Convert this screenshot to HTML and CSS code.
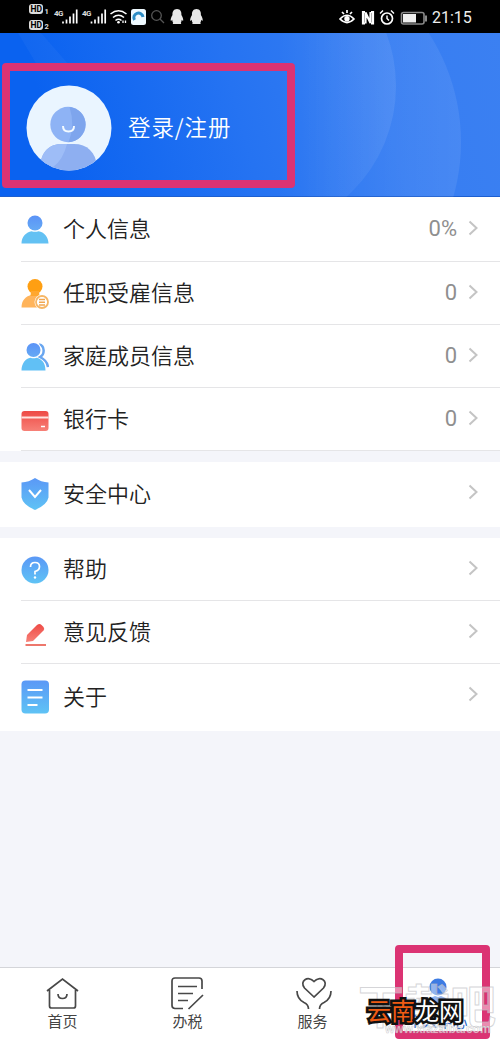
FILE: index.html
```html
<!DOCTYPE html>
<html lang="zh-CN">
<head>
<meta charset="utf-8">
<title>个人中心</title>
<link rel="stylesheet" href="styles.css">
</head>
<body>
<svg class="defs" width="0" height="0">
  <defs>
    <linearGradient id="blue" x1="0" y1="0" x2="0" y2="1"><stop offset="0" stop-color="#5b98f6"/><stop offset="1" stop-color="#5fc3f5"/></linearGradient>
    <linearGradient id="head" x1="0" y1="0" x2="0" y2="1"><stop offset="0" stop-color="#5b93f7"/><stop offset="1" stop-color="#65aaf4"/></linearGradient>
    <linearGradient id="red" x1="0" y1="0" x2="0" y2="1"><stop offset="0" stop-color="#ee4b46"/><stop offset="1" stop-color="#f78178"/></linearGradient>
    <linearGradient id="fade" x1="0" y1="0" x2="1" y2="0"><stop offset=".6" stop-color="#fff" stop-opacity="0"/><stop offset="1" stop-color="#fff" stop-opacity=".08"/></linearGradient>
  </defs>
</svg>
<div class="screen">
  <header class="status">
    <svg class="status-left" width="180" height="33" viewBox="0 0 180 33">
      <g fill="#ddd"><rect x="1" y="4" width="14" height="10" rx="3"/><rect x="1" y="20" width="14" height="10" rx="3"/></g>
      <g class="hd"><text x="2.5" y="12">HD</text><text x="2.5" y="28">HD</text></g>
      <g class="tiny"><text x="16.500" y="14">1</text><text x="16.500" y="29">2</text><text class="net" x="26" y="16">4G</text><text class="net" x="54" y="16">4G</text></g>
      <g stroke="#fff" stroke-width="1.7"><path d="M35 23.500v-2M38.500 23.500v-4M42 23.500v-7M45.500 23.500v-10M48.700 23.500v-14M63.500 23.500v-2M67 23.500v-4M70.500 23.500v-7M74 23.500v-10M77.200 23.500v-14"/></g>
      <g fill="none" stroke="#fff" stroke-width="1.6"><path d="M82.500 14q8-6.500 16 0M85 17.500q5.500-4.500 11 0M87.500 20.500q3-2.500 6 0"/></g>
      <circle cx="90.500" cy="22.300" r="1.300" fill="#fff"/><path d="M95 23v-2.500m2.500 0v2.500" stroke="#fff" stroke-width="1.300"/>
      <rect x="103" y="9" width="15" height="16" rx="2.500" fill="#eef9ff"/><path d="M106.500 20a4.600 4.600 0 1 1 8.500-3" fill="none" stroke="#2c8cc5" stroke-width="3"/>
      <g fill="none" stroke="#555" stroke-width="1.300"><circle cx="128.500" cy="15.500" r="4.800"/><path d="m132 19 4 4"/></g>
      <g fill="#e8e8e8"><path id="qq" d="M149 9c-3.500 0-4.800 3-4.500 6-1.300 2-2 4-1.800 5.500.5.800 1-.2 1.500-.8.300 1.800.5 2.500 1 3-.7.800-.5 1.400.8 1.400h6c1.300 0 1.500-.6.800-1.400.5-.7.700-1.500.9-3 .6.700 1.200 1.500 1.500.8.200-1.500-.5-3.500-1.800-5.500C153.700 12 152.500 9 149 9z"/><use href="#qq" x="19.500"/></g>
    </svg>
    <div class="status-right">
      <svg width="90" height="20" viewBox="0 0 90 20">
        <g fill="none" stroke="#fff" stroke-width="1.700"><path d="M1 11q7-7.500 14 0-7 7-14 0zM3 4l2 2M8 2v3M13 4l-2 2"/><path d="M26 4h-2v11.500h2M32 4h2v11.500h-2M26.500 15.500V4.500l5 10.500V4" stroke-width="2.200"/><circle cx="48" cy="10.500" r="5.500"/><path d="M48 7.500v3l2 2M41 5.500l3-3M55 5.500l-3-3" stroke-width="1.400"/></g>
        <circle cx="8" cy="10.800" r="2.700" fill="#fff"/>
        <rect x="62.500" y="4.500" width="22.500" height="11.500" rx="2" fill="none" stroke="#888" stroke-width="1.600"/><rect x="64" y="6" width="13" height="8.500" fill="#eee"/><path d="M87 7.500v6" stroke="#888" stroke-width="2"/>
      </svg>
      <span class="time">21:15</span>
    </div>
  </header>

  <section class="profile">
    <svg class="waves" width="500" height="164" viewBox="0 0 500 164"><circle cx="247" cy="53" r="149" fill="url(#fade)"/><circle cx="261" cy="109" r="200" fill="url(#fade)"/><path d="M18 0h23l28 32H37z" fill="#fff" opacity=".035"/></svg>
    <svg class="avatar" width="86" height="86" viewBox="0 0 86 86">
      <clipPath id="face"><circle cx="43" cy="43" r="42.500"/></clipPath>
      <circle cx="43" cy="43" r="42.500" fill="#eaf5ff"/>
      <g clip-path="url(#face)"><circle cx="42" cy="39.500" r="17.700" fill="#8eb3f5"/><path d="M43.500 21.900a17.700 17.700 0 0 1-1 35.300q7-17 1-35.300z" fill="#7ea5ed"/><path d="M14 82c1-16 10-23 22-23h12c13 0 22 8 23 23v4H14z" fill="#8eaff1"/><path d="M14 82c1-16 10-23 22-23h5Q37 75 27 82v4H14z" fill="#9ebdf7"/></g>
      <path d="M37 41q0 5.500 5.500 5.500T48 41" fill="none" stroke="#f3faff" stroke-width="2"/>
    </svg>
    <span class="login">登录/注册</span>
  </section>

  <main class="menu">
    <section class="group">
      <div class="row r1"><svg class="icon" viewBox="0 0 28 34"><circle cx="14" cy="11" r="7.500" fill="url(#head)"/><path d="M.5 31.500c0-7 5-11.500 10-12.300q3.500 1.300 7 0C23 20 27.500 25 27.500 31.500z" fill="#63c1f3"/></svg><span class="label">个人信息</span><span class="value">0%</span><svg class="arrow" viewBox="0 0 10 16"><path d="m1.500 1.500 7 6.500-7 6.500"/></svg></div>
      <div class="row r2"><svg class="icon" viewBox="0 0 28 34"><path d="M.5 31.500c0-7 4-11 9.500-12.500l4-1 5 2 3 3-5 8.500z" fill="#ffb45b"/><circle cx="14" cy="10.500" r="7.500" fill="#ff9f12"/><path d="M10 15h8l.5 5h-9z" fill="#ffa72f"/><circle cx="21" cy="26" r="7.500" fill="#fff"/><circle cx="21" cy="26" r="6" fill="#fff" stroke="#f6b665" stroke-width="1.800"/><path d="M18 23.500h6M18 26.200h6M18 29h6" stroke="#f1a750" stroke-width="1.400"/></svg><span class="label">任职受雇信息</span><span class="value">0</span><svg class="arrow" viewBox="0 0 10 16"><path d="m1.500 1.500 7 6.500-7 6.500"/></svg></div>
      <div class="row r3"><svg class="icon" viewBox="0 0 28 34"><path d="M18 5.500c6 1 6 10 1 12.500 5 2.500 7.500 6 8 10" fill="none" stroke="#69a6f0" stroke-width="2.500"/><circle cx="12.500" cy="11" r="8" fill="#fff"/><circle cx="12.500" cy="11" r="7" fill="url(#head)"/><path d="M.5 31.500c0-7 4-12 9-12.800q3 1.200 6 0C21 20 24.500 24 24.500 31.500z" fill="#61c0f5"/></svg><span class="label">家庭成员信息</span><span class="value">0</span><svg class="arrow" viewBox="0 0 10 16"><path d="m1.500 1.500 7 6.500-7 6.500"/></svg></div>
      <div class="row r4"><svg class="icon" viewBox="0 0 28 34"><rect x=".5" y="9" width="27" height="20" rx="3" fill="url(#red)"/><path d="M.5 15.500h27" stroke="#ffe4e0" stroke-width="2"/><path d="M20 24.500h4" stroke="#fff" stroke-width="1.500"/></svg><span class="label">银行卡</span><span class="value">0</span><svg class="arrow" viewBox="0 0 10 16"><path d="m1.500 1.500 7 6.500-7 6.500"/></svg></div>
    </section>
    <section class="group">
      <div class="row r5"><svg class="icon" viewBox="0 0 28 34"><path d="M14 1q6 4 13.500 4.500v15Q26 28 14 33 2 28 .5 20.500v-15Q8 5 14 1z" fill="url(#blue)"/><path d="m8 13 6 7 6-7" fill="none" stroke="#fff" stroke-width="2"/></svg><span class="label">安全中心</span><svg class="arrow" viewBox="0 0 10 16"><path d="m1.500 1.500 7 6.500-7 6.500"/></svg></div>
    </section>
    <section class="group">
      <div class="row r6"><svg class="icon" viewBox="0 0 28 34"><circle cx="14" cy="18" r="13.500" fill="url(#blue)"/><path d="M9.500 15q0-4.500 4.500-4.500t4.500 4-4.500 5v3" fill="none" stroke="#fff" stroke-width="1.700"/><circle cx="14" cy="25.500" r="1.200" fill="#fff"/></svg><span class="label">帮助</span><svg class="arrow" viewBox="0 0 10 16"><path d="m1.500 1.500 7 6.500-7 6.500"/></svg></div>
      <div class="row r7"><svg class="icon" viewBox="0 0 28 34"><path d="m6 20 10-10q2.500-2 4.500 0l2 2q1.500 2 0 3.500L12 26l-7 1z" fill="url(#red)"/><path d="M4.500 30h20.500" stroke="#ed776c" stroke-width="2"/></svg><span class="label">意见反馈</span><svg class="arrow" viewBox="0 0 10 16"><path d="m1.500 1.500 7 6.500-7 6.500"/></svg></div>
      <div class="row r8"><svg class="icon" viewBox="0 0 28 34"><rect x=".5" y=".5" width="27.500" height="33" rx="4" fill="url(#blue)"/><path d="M6.500 10h15M6.500 17.500h15M6.500 25h10" stroke="#fff" stroke-width="2"/></svg><span class="label">关于</span><svg class="arrow" viewBox="0 0 10 16"><path d="m1.500 1.500 7 6.500-7 6.500"/></svg></div>
    </section>
  </main>

  <nav class="tabs">
    <div class="tab"><svg viewBox="0 0 36 34"><path d="M2 14 17.500 2 33 14M4.500 13v16q0 2 2 2h22q2 0 2-2V13M13 17q0 4.500 4.500 4.500T22 17"/></svg><span>首页</span></div>
    <div class="tab"><svg viewBox="0 0 36 34"><path d="M13 31.500H5q-3 0-3-3V4q0-3 3-3h24q3 0 3 3v8M18.500 32 33 18M8 9.500h19M8 16.500h15M8 23.500h10"/></svg><span>办税</span></div>
    <div class="tab"><svg viewBox="0 0 36 34"><path d="M19 20 9.500 11C4 4 13-2 19 4.500 25-2 34 4 28.500 11zM2 14q0 8 7 11.500 4.500 2 4.500 6.500M36 14q0 8-7 11.500-4.500 2-4.500 6.500"/></svg><span>服务</span></div>
    <div class="tab active"><svg viewBox="0 0 36 34"><circle cx="18" cy="10" r="8.500"/><path d="M5 33q1-12 10-14l3 1 3-1q9 2 10 14z"/></svg><span>个人中心</span></div>
  </nav>

  <div class="mark mark-login"></div>
  <div class="mark mark-tab"></div>
  <div class="stamp">下载吧</div>
  <div class="stamp-url">www.xiazaiba.com</div>
  <div class="brand"><span>云南</span>龙网</div>
</div>
</body>
</html>
```
FILE: styles.css
```css
* { box-sizing: border-box; }
body { margin: 0; }
.defs { position: absolute; }
.screen {
  position: relative;
  display: flex;
  flex-direction: column;
  width: 500px;
  height: 1039px;
  overflow: hidden;
  background: #f4f5fa;
  color: #222;
  font-family: Roboto, "Noto Sans CJK SC", sans-serif;
}
.status {
  display: flex;
  justify-content: space-between;
  height: 33px;
  padding: 0 28px;
  background: #000;
}
.hd { font: bold 8.5px Roboto, sans-serif; fill: #000; }
.tiny { font: bold 7.5px Roboto, sans-serif; fill: #ddd; }
.net { font-size: 8px; letter-spacing: -.5px; }
.status-right { display: flex; align-items: center; gap: 3px; padding-top: 2px; color: #eee; }
.time { font-size: 16px; line-height: 20px; width: 40px; white-space: nowrap; }
.profile {
  position: relative;
  display: flex;
  align-items: center;
  gap: 16px;
  height: 164px;
  padding: 26px 26px 0;
  background: linear-gradient(75deg, #0a62f0 12%, #2573f2 48%, #367df2 75%, #3b80f2);
  border-bottom: 1px solid #1d5fd0;
}
.waves { position: absolute; inset: 0; }
.avatar, .login { position: relative; }
.login { padding-bottom: 3px; color: #fff; font: 350 22.5px/30px "Noto Sans CJK SC", sans-serif; letter-spacing: .9px; white-space: nowrap; }
.menu { display: flex; flex-direction: column; gap: 11px; }
.group { background: #fff; }
.row {
  display: flex;
  align-items: center;
  height: 63px;
  margin-left: 21px;
  padding-right: 22px;
  border-bottom: 1px solid #e5e5e7;
}
.r1 { height: 65px; }
.r5 { height: 65px; border: 0; padding-bottom: 1px; }
.r8 { height: 67px; border: 0; padding-bottom: 1px; }
.icon { width: 28px; height: 34px; margin-right: 14px; flex: none; }
.label { flex: 1; padding-top: 2px; font-size: 22px; line-height: 30px; font-weight: 350; }
.value { margin-right: 11px; color: #8f8f8f; font-size: 22px; line-height: 26px; }
.arrow { width: 10px; height: 16px; margin-bottom: 2px; fill: none; stroke: #c4c4c4; stroke-width: 2; }
.r5 .arrow { margin-bottom: 5px; }
.r8 .arrow { margin-bottom: 7px; }
.tabs {
  display: flex;
  height: 72px;
  margin-top: auto;
  background: #fff;
  border-top: 1px solid #d4d5d9;
}
.tab {
  display: flex;
  flex: 1;
  flex-direction: column;
  align-items: center;
  padding-top: 9px;
  color: #444;
  font-size: 15px;
  line-height: 22px;
}
.tab svg { width: 36px; height: 34px; fill: none; stroke: #484848; stroke-width: 1.7; overflow: visible; }
.active { color: #2d68c8; }
.active svg { fill: #3c7be3; stroke: none; }
.mark { position: absolute; border: 8px solid #db3373; border-radius: 4px; }
.mark-login { left: 2px; top: 63px; width: 293px; height: 125px; }
.mark-tab { left: 395px; top: 945px; width: 95px; height: 94px; }
.stamp {
  position: absolute;
  left: 358px;
  top: 970px;
  font: bold 46px/66px "Noto Sans CJK SC", sans-serif;
  color: rgba(255, 255, 255, .45);
  -webkit-text-stroke: 1px rgba(185, 185, 190, .6);
  white-space: nowrap;
}
.stamp-url {
  position: absolute;
  left: 385px;
  top: 1020px;
  font: bold 12px/18px "Liberation Sans", sans-serif;
  color: rgba(255, 255, 255, .65);
  -webkit-text-stroke: .5px rgba(150, 150, 155, .55);
}
.brand {
  position: absolute;
  left: 367px;
  top: 992px;
  font: 400 24px/36px "Noto Sans CJK SC", sans-serif;
  color: #fff;
  -webkit-text-stroke: 5px #111;
  paint-order: stroke fill;
  white-space: nowrap;
}
.brand span { color: #ef5b13; }
```
